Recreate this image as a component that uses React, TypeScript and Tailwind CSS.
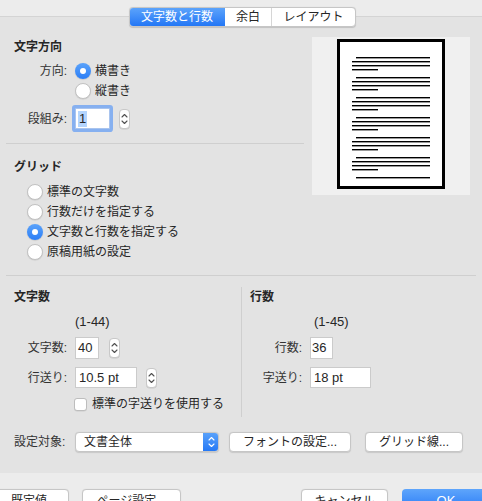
import React from "react";

function Radio({ on }: { on?: boolean }) {
  if (on) {
    return (
      <span className="w-[16px] h-[16px] shrink-0 rounded-full bg-linear-to-b from-[#5aa2fa] to-[#2b7ef6] flex items-center justify-center shadow-[0_0.5px_1px_rgba(0,0,0,0.2)]">
        <span className="w-[6px] h-[6px] rounded-full bg-white" />
      </span>
    );
  }
  return (
    <span className="w-[16px] h-[16px] shrink-0 rounded-full bg-white border border-[#c2c2c2] shadow-[0_0.5px_1px_rgba(0,0,0,0.12)]" />
  );
}

function Chevrons({ color }: { color: string }) {
  return (
    <svg width="7" height="14" viewBox="0 0 7 14" fill="none" stroke={color} strokeWidth="1.1" strokeLinecap="round" strokeLinejoin="round">
      <path d="M1 5 L3.5 2.5 L6 5" />
      <path d="M1 9 L3.5 11.5 L6 9" />
    </svg>
  );
}

function Stepper() {
  return (
    <div className="w-[11px] h-[20px] shrink-0 rounded-[4px] bg-white border border-[#c8c8c8] shadow-[0_0.5px_0.5px_rgba(0,0,0,0.12)] flex items-center justify-center">
      <Chevrons color="#505050" />
    </div>
  );
}

function Btn({ children, className }: { children: React.ReactNode; className: string }) {
  return (
    <div className={"shrink-0 h-[20px] rounded-[4px] bg-white border border-[#c6c6c6] shadow-[0_0.5px_1px_rgba(0,0,0,0.12)] flex items-center justify-center text-[12px] " + className}>
      {children}
    </div>
  );
}

function PagePreview() {
  const groups = [18, 38, 58, 78, 98, 118];
  return (
    <svg width="108" height="150" viewBox="0 0 108 150">
      <rect x="1.5" y="1.5" width="105" height="147" fill="white" stroke="black" strokeWidth="3" />
      {groups.map((g) => (
        <g key={g} fill="black">
          <rect x="19" y={g} width="74" height="1.4" />
          <rect x="15" y={g + 4} width="78" height="1.4" />
          <rect x="15" y={g + 8} width="78" height="1.4" />
          <rect x="15" y={g + 12} width="26" height="1.4" />
        </g>
      ))}
      <rect x="19" y="138" width="74" height="1.4" fill="black" />
    </svg>
  );
}

export default function App() {
  return (
    <div className="w-[482px] h-[501px] overflow-hidden bg-[#ececec] text-[12px] leading-[16px] text-[#262626] font-['Liberation_Sans','Noto_Sans_CJK_JP',sans-serif]">
      <div className="h-[17px] border-b border-[#d4d4d4]" />
      <div className="h-[456px] bg-[#e3e3e3] flex flex-col">
        {/* tabs */}
        <div className="-mt-[10px] pl-[129px] flex">
          <div className="flex h-[20px] rounded-[4px] border border-[#c6c6c6] bg-white shadow-[0_0.5px_1px_rgba(0,0,0,0.15)] overflow-hidden">
            <div className="w-[96px] -ml-px -my-px bg-linear-to-b from-[#5ea5fb] to-[#1f74f5] text-white flex items-center justify-center rounded-l-[4px]">
              文字数と行数
            </div>
            <div className="w-[47px] border-r border-[#d6d6d6] flex items-center justify-center">余白</div>
            <div className="w-[83px] flex items-center justify-center">レイアウト</div>
          </div>
        </div>

        {/* top area */}
        <div className="flex px-[6px]">
          <div className="w-[298px] flex flex-col">
            <div className="mt-[12px] h-[16px] px-[8px] font-bold">文字方向</div>
            <div className="mt-[6px] h-[20px] flex items-center">
              <div className="w-[61px] text-right text-[#333]">方向:</div>
              <div className="ml-[8px]"><Radio on /></div>
              <div className="ml-[4px]">横書き</div>
            </div>
            <div className="h-[20px] flex items-center pl-[69px]">
              <Radio />
              <div className="ml-[4px]">縦書き</div>
            </div>
            <div className="mt-[6px] h-[23px] flex items-center">
              <div className="w-[61px] text-right text-[#333]">段組み:</div>
              <div className="ml-[8px] w-[35px] h-[21px] bg-white border border-[#a9c4ee] rounded-[1px] shadow-[0_0_0_3px_#86b0f0] flex items-center pl-[2px] text-[13px]">
                <span className="bg-[#b4d5fe] px-[1px]">1</span>
              </div>
              <div className="ml-[9px]"><Stepper /></div>
            </div>
            <div className="mt-[13px] h-px bg-[#cfcfcf]" />
            <div className="mt-[15px] h-[16px] px-[8px] font-bold">グリッド</div>
            <div className="mt-[7px] flex flex-col">
              {[
                ["標準の文字数", false],
                ["行数だけを指定する", false],
                ["文字数と行数を指定する", true],
                ["原稿用紙の設定", false],
              ].map(([t, on]) => (
                <div key={t as string} className="h-[20px] flex items-center pl-[21px]">
                  <Radio on={on as boolean} />
                  <div className="ml-[4px]">{t as string}</div>
                </div>
              ))}
            </div>
          </div>
          <div className="ml-[8px] mt-[10px] w-[158px] h-[158px] bg-[#f0f0f0] flex justify-center pt-[2px]">
            <PagePreview />
          </div>
        </div>

        <div className="mx-[6px] mt-[13px] h-px bg-[#cfcfcf]" />

        {/* char/line counts */}
        <div className="mt-[11px] h-[130px] px-[6px] flex">
          <div className="w-[236px] border-r border-[#cfcfcf] flex flex-col">
            <div className="pt-[2px] h-[18px] px-[8px] font-bold">文字数</div>
            <div className="mt-[9px] h-[16px] pl-[69px] text-[13px]">(1-44)</div>
            <div className="mt-[7px] h-[22px] flex items-center">
              <div className="w-[61px] text-right text-[#333]">文字数:</div>
              <div className="ml-[8px] w-[24px] h-[22px] bg-white border border-[#cbcbcb] flex items-center pl-[2px] text-[13px]">40</div>
              <div className="ml-[10px]"><Stepper /></div>
            </div>
            <div className="mt-[8px] h-[21px] flex items-center">
              <div className="w-[61px] text-right text-[#333]">行送り:</div>
              <div className="ml-[8px] w-[62px] h-[21px] bg-white border border-[#cbcbcb] flex items-center pl-[3px] text-[13px]">10.5 pt</div>
              <div className="ml-[9px]"><Stepper /></div>
            </div>
            <div className="mt-[9px] h-[14px] flex items-center pl-[68px]">
              <span className="w-[13px] h-[13px] bg-white border border-[#bdbdbd] rounded-[3px] shadow-[0_0.5px_0.5px_rgba(0,0,0,0.1)]" />
              <div className="ml-[5px]">標準の字送りを使用する</div>
            </div>
          </div>
          <div className="flex-1 flex flex-col">
            <div className="pt-[2px] h-[18px] pl-[8px] font-bold">行数</div>
            <div className="mt-[9px] h-[16px] pl-[72px] text-[13px]">(1-45)</div>
            <div className="mt-[7px] h-[22px] flex items-center">
              <div className="w-[60px] text-right text-[#333]">行数:</div>
              <div className="ml-[8px] w-[23px] h-[22px] bg-white border border-[#cbcbcb] flex items-center pl-[1px] text-[13px]">36</div>
            </div>
            <div className="mt-[8px] h-[21px] flex items-center">
              <div className="w-[60px] text-right text-[#333]">字送り:</div>
              <div className="ml-[8px] w-[61px] h-[21px] bg-white border border-[#cbcbcb] flex items-center pl-[3px] text-[13px]">18 pt</div>
            </div>
          </div>
        </div>

        {/* setting target row */}
        <div className="mt-[15px] h-[20px] px-[6px] flex items-center">
          <div className="w-[61px] pl-[8px] text-[#333]">設定対象:</div>
          <div className="ml-[8px] w-[144px] h-[20px] rounded-[4px] bg-white border border-[#c6c6c6] shadow-[0_0.5px_1px_rgba(0,0,0,0.12)] flex overflow-hidden">
            <div className="flex-1 pl-[8px] flex items-center">文書全体</div>
            <div className="w-[16px] -my-px -mr-px bg-linear-to-b from-[#5ba3fa] to-[#2176f5] flex items-center justify-center rounded-r-[4px]">
              <Chevrons color="#ffffff" />
            </div>
          </div>
          <Btn className="ml-[10px] w-[122px]">フォントの設定...</Btn>
          <Btn className="ml-[14px] w-[98px]">グリッド線...</Btn>
        </div>
      </div>

      {/* bottom bar */}
      <div className="pt-[16px] flex">
        <Btn className="-ml-[11px] w-[80px] !h-[24px]">既定値</Btn>
        <Btn className="ml-[13px] w-[99px] !h-[24px]">ページ設定...</Btn>
        <Btn className="ml-[120px] w-[87px] !h-[24px]">キャンセル</Btn>
        <div className="ml-[14px] w-[88px] h-[24px] shrink-0 rounded-[4px] bg-linear-to-b from-[#5ea5fb] to-[#1f74f5] text-white flex items-center justify-center text-[13px]">
          OK
        </div>
      </div>
    </div>
  );
}
